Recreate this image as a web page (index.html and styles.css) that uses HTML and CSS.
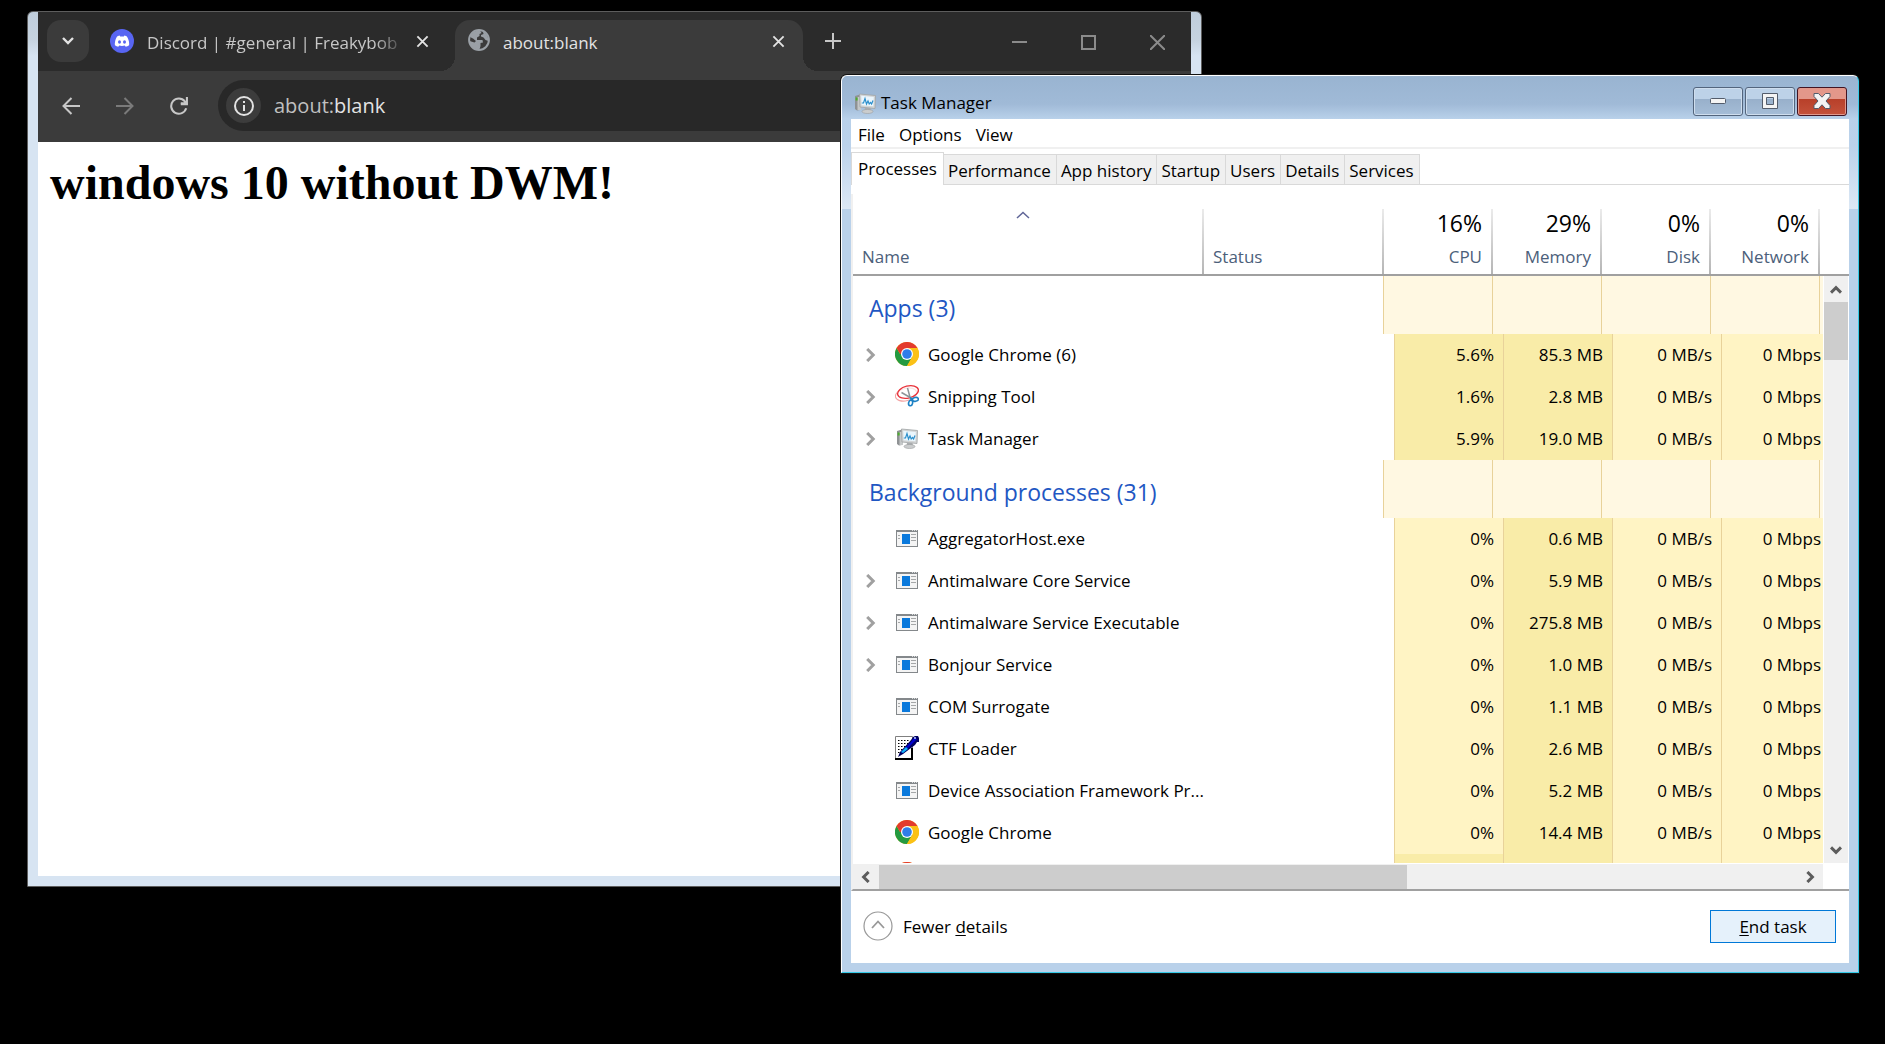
FILE: index.html
```html
<!DOCTYPE html>
<html lang="en">
<head>
<meta charset="utf-8">
<title>Desktop</title>
<link rel="stylesheet" href="styles.css">
</head>
<body>
<svg class="sprite" aria-hidden="true">
  <symbol id="chrome" viewBox="0 0 24 24">
    <circle cx="12" cy="12" r="12" fill="#fbc116"/>
    <path d="M1.6 6A12 12 0 0 0 12 24L17.2 15L12 12H5.1Z" fill="#249a41"/>
    <path d="M12 24A12 12 0 0 0 22.4 6H12L17.2 15Z" fill="#fbc116"/>
    <path d="M1.6 6A12 12 0 0 1 22.4 6H12V12H5.1Z" fill="#e33b2e"/>
    <circle cx="12" cy="12" r="6" fill="#fff"/>
    <circle cx="12" cy="12" r="4.8" fill="#2f7de9"/>
  </symbol>
  <symbol id="monitor" viewBox="0 0 24 24">
    <path d="M2 5L7 3.5V19L4 19.5L2 18Z" fill="#8f9294"/>
    <path d="M4.500 6H8V19H4.500Z" fill="#c5c8c9"/>
    <rect x="2.600" y="6.500" width="2" height="3" fill="#4caf2c"/>
    <path d="M6.500 3L22.500 4.500L22 17.500L7 16Z" fill="#d3d5d6" stroke="#a0a3a5" stroke-width=".8"/>
    <path d="M8.200 4.800L20.800 6L20.300 15.300L8.600 14.200Z" fill="#eaf6fd"/>
    <path d="M8.800 12L10.500 12L12 7.500L13.500 13L15 10L16.200 13L17.600 11.500L18.600 13L20 9.500" fill="none" stroke="#2c8fcc" stroke-width="1.200"/>
    <path d="M12 17H17.500L18 20H11.500Z" fill="#a9acae"/>
    <ellipse cx="14.500" cy="20.500" rx="5.500" ry="2" fill="#cbcdce" stroke="#9b9ea0" stroke-width=".6"/>
  </symbol>
  <symbol id="snip" viewBox="0 0 24 24">
    <ellipse cx="11" cy="10.5" rx="10.8" ry="6.2" transform="rotate(-14 11 10.5)" fill="none" stroke="#f3a4a4" stroke-width="1.1"/>
    <ellipse cx="13" cy="8" rx="10.6" ry="6" transform="rotate(-14 13 8)" fill="#fff" fill-opacity=".7" stroke="#e8323a" stroke-width="1.4"/>
    <path d="M6.5 8.5L17 14.5M12.5 4L15.5 15" stroke="#8d9599" stroke-width="1.5"/>
    <ellipse cx="20.4" cy="15.4" rx="3" ry="1.9" transform="rotate(-12 20.4 15.4)" fill="none" stroke="#1c80c4" stroke-width="1.6"/>
    <ellipse cx="15.6" cy="19" rx="2" ry="2.8" transform="rotate(14 15.6 19)" fill="none" stroke="#1c80c4" stroke-width="1.6"/>
    <path d="M14.6 12.6L18 15L15.6 16.4Z" fill="#1c80c4"/>
  </symbol>
  <symbol id="exe" viewBox="0 0 24 24">
    <rect x="1.5" y="4.5" width="21" height="16" fill="#f4f4f4" stroke="#84888b"/>
    <path d="M1 4H23V6H1Z" fill="#84888b"/>
    <path d="M17 4.5H18M19 4.5H20M21 4.5H22" stroke="#d8dadb"/>
    <path d="M3 9.5H5M3 12.5H5M16 8.5H21M16 11.5H21M16 14.5H21" stroke="#a5a7a8"/>
    <rect x="7" y="8" width="8" height="10" fill="#0a79dc"/>
  </symbol>
  <symbol id="ctf" viewBox="0 0 24 24">
    <path d="M.5 .5H17.5V23.5H.5Z" fill="#fff" stroke="#808080"/>
    <path d="M16 12H18V24H0V22H16Z" fill="#000"/>
    <path d="M3 4.5H15M3 7.5H14M3 10.5H11M3 13.5H8M3 16.5H6" stroke="#000" stroke-dasharray="1.5 1.5"/>
    <path d="M3 21L5 16L16 4L18 1L20 0H23L24 2V6L22 6L20 9L8 18Z" fill="#000060"/>
    <path d="M6 16L16 6L19 2L22 3L18 7L8 17Z" fill="#0000d0"/>
    <path d="M6 16L11 11L13 13L8 17Z" fill="#12b6f5"/>
    <path d="M19 1H21V3H19Z" fill="#8fa0e8"/>
  </symbol>
  <symbol id="chev" viewBox="0 0 10 14">
    <path d="M1.2 1L7.2 7L1.2 13" fill="none" stroke="#a0a0a0" stroke-width="3"/>
  </symbol>
  <symbol id="arrow" viewBox="0 0 12 12">
    <path d="M1 8.6L6 3.6L11 8.6" fill="none" stroke="#5c5c5c" stroke-width="3"/>
  </symbol>
  <symbol id="close" viewBox="0 0 14 14">
    <path d="M1.5 1.5L12.5 12.5M12.5 1.5L1.5 12.5" fill="none" stroke="currentColor" stroke-width="2"/>
  </symbol>
</svg>

<main class="desktop">
<section class="browser" aria-label="Browser window">
  <div class="chrome">
    <header class="strip">
      <button class="tabsearch" aria-label="Search tabs"><svg width="14" height="10" viewBox="0 0 14 10"><path d="M2 2L7 7L12 2" fill="none" stroke="#e3e3e3" stroke-width="2.4"/></svg></button>
      <div class="tab">
        <svg class="fav" width="24" height="24" viewBox="0 0 24 24"><circle cx="12" cy="12" r="12" fill="#5865f2"/><path d="M9.6 6.6L8 7C6.800 7.400 5.800 9.500 5.200 12C4.800 13.800 4.700 15.200 4.900 16.200C6 17.100 7.200 17.600 8.300 17.800L9.200 16.500C11 17 13 17 14.800 16.500L15.700 17.800C16.800 17.600 18 17.100 19.100 16.200C19.300 15.200 19.200 13.800 18.800 12C18.200 9.500 17.200 7.400 16 7L14.400 6.600L13.800 7.600H10.200Z" fill="#fff"/><ellipse cx="9.500" cy="13" rx="1.500" ry="1.700" fill="#5865f2"/><ellipse cx="14.500" cy="13" rx="1.500" ry="1.700" fill="#5865f2"/></svg>
        <span class="tabtext fade">Discord | #general | Freakybob</span>
        <button class="plain" aria-label="Close tab"><svg width="13" height="13"><use href="#close"/></svg></button>
      </div>
      <div class="tab active">
        <svg class="fav" width="22" height="22" viewBox="0 0 22 22"><circle cx="11" cy="11" r="9.900" fill="#3b3b3b" stroke="#9aa0a6" stroke-width="2"/><path d="M2 8C4 3 8 1 12 1.500L13.500 4L11.500 5V7L9 8.500V11H14.500L15 13.500L12.500 14V17L11.500 20.500C6 20.500 2 17 1.600 12L6.500 13.500L8 12L5 9.500Z" fill="#9aa0a6"/><path d="M15 2.500C19 5 20.500 8 20.400 12L17.500 11L15.500 8.500L13 7.500V6L15.500 5Z" fill="#9aa0a6"/></svg>
        <span class="tabtext">about:blank</span>
        <button class="plain" aria-label="Close tab"><svg width="13" height="13"><use href="#close"/></svg></button>
      </div>
      <button class="plain newtab" aria-label="New tab"><svg width="16" height="16" viewBox="0 0 16 16"><path d="M8 0V16M0 8H16" stroke="#c7c7c7" stroke-width="2"/></svg></button>
      <div class="winctl">
        <button class="plain" aria-label="Minimize"><svg width="15" height="15"><path d="M0 7H15" stroke="#8b8b8b" stroke-width="2"/></svg></button>
        <button class="plain" aria-label="Maximize"><svg width="15" height="15"><path d="M1 1H14V14H1Z" fill="none" stroke="#8b8b8b" stroke-width="2"/></svg></button>
        <button class="plain" aria-label="Close"><svg width="15" height="15"><path d="M0 0L15 15M15 0L0 15" stroke="#8b8b8b" stroke-width="2"/></svg></button>
      </div>
    </header>
    <div class="toolbar">
      <button class="plain nav" aria-label="Back"><svg width="18" height="18" viewBox="0 0 18 18"><path d="M18 9H1.500M9.500 1L1.500 9L9.500 17" fill="none" stroke="#c7c7c7" stroke-width="2"/></svg></button>
      <button class="plain nav" aria-label="Forward" disabled><svg width="18" height="18" viewBox="0 0 18 18"><path d="M0 9H16.500M8.500 1L16.500 9L8.500 17" fill="none" stroke="#7a7a7a" stroke-width="2"/></svg></button>
      <button class="plain nav" aria-label="Reload"><svg width="18" height="18" viewBox="0 0 20 20"><path d="M18 12.500A8.500 8.500 0 1 1 16.500 4.800L18 7H12" fill="none" stroke="#c7c7c7" stroke-width="2.300"/><path d="M18.800 0V8H12" fill="none" stroke="#c7c7c7" stroke-width="2.300"/></svg></button>
      <div class="omnibox">
        <button class="info" aria-label="Site information"><svg width="20" height="20" viewBox="0 0 20 20"><circle cx="10" cy="10" r="9" fill="none" stroke="#e3e3e3" stroke-width="2"/><path d="M10 9V15M10 5V7" stroke="#e3e3e3" stroke-width="2"/></svg></button>
        <a class="url" href="about:blank"><span>about:</span>blank</a>
      </div>
    </div>
    <article class="page"><h1>windows 10 without DWM!</h1></article>
  </div>
</section>

<section class="taskmgr" aria-label="Task Manager">
  <header class="title">
    <svg width="24" height="24"><use href="#monitor"/></svg>
    <span>Task Manager</span>
    <div class="caption">
      <button class="cap" aria-label="Minimize"><svg width="16" height="16" viewBox="0 0 16 16"><rect x=".500" y="5.500" width="15" height="5" rx="1" fill="#f4f4f4" stroke="#535c6b"/></svg></button>
      <button class="cap" aria-label="Maximize"><svg width="16" height="16" viewBox="0 0 16 16"><path d="M.500 .500H15.500V15.500H.500ZM4.500 4.500V11.500H11.500V4.500Z" fill="#f4f4f4" fill-rule="evenodd" stroke="#535c6b"/></svg></button>
      <button class="cap red" aria-label="Close"><svg width="18" height="16" viewBox="0 0 18 16"><path d="M1 .500H5.500L9 4.200L12.500 .500H17V3.500L13 8L17 12.500V15.500H12.500L9 11.800L5.500 15.500H1V12.500L5 8L1 3.500Z" fill="#f4f4f4" stroke="#535c6b"/></svg></button>
    </div>
  </header>
  <div class="client">
    <nav class="menu"><button>File</button><button>Options</button><button>View</button></nav>
    <div class="tabs" role="tablist">
      <button role="tab" class="sel" aria-selected="true">Processes</button><button role="tab">Performance</button><button role="tab">App history</button><button role="tab">Startup</button><button role="tab">Users</button><button role="tab">Details</button><button role="tab">Services</button>
    </div>
    <div class="list">
      <table>
        <thead><tr>
          <th class="name"><svg class="sort" width="14" height="8" viewBox="0 0 14 8"><path d="M1 7L7 1.500L13 7" fill="none" stroke="#5f6597" stroke-width="1.500"/></svg>Name</th><th class="status">Status</th>
          <th><b>16%</b>CPU</th><th><b>29%</b>Memory</th><th><b>0%</b>Disk</th><th><b>0%</b>Network</th>
        </tr></thead>
        <tbody>
          <tr class="group"><th scope="rowgroup">Apps (3)</th><td></td><td></td><td></td><td></td><td></td></tr>
          <tr><th scope="row"><svg class="ch"><use href="#chev"/></svg><svg class="ic"><use href="#chrome"/></svg>Google Chrome (6)</th><td class="hot">5.6%</td><td class="hot">85.3 MB</td><td>0 MB/s</td><td>0 Mbps</td></tr>
          <tr><th scope="row"><svg class="ch"><use href="#chev"/></svg><svg class="ic"><use href="#snip"/></svg>Snipping Tool</th><td class="hot">1.6%</td><td class="hot">2.8 MB</td><td>0 MB/s</td><td>0 Mbps</td></tr>
          <tr><th scope="row"><svg class="ch"><use href="#chev"/></svg><svg class="ic"><use href="#monitor"/></svg>Task Manager</th><td class="hot">5.9%</td><td class="hot">19.0 MB</td><td>0 MB/s</td><td>0 Mbps</td></tr>
          <tr class="group"><th scope="rowgroup">Background processes (31)</th><td></td><td></td><td></td><td></td><td></td></tr>
          <tr><th scope="row"><svg class="ch"></svg><svg class="ic"><use href="#exe"/></svg>AggregatorHost.exe</th><td>0%</td><td class="hot">0.6 MB</td><td>0 MB/s</td><td>0 Mbps</td></tr>
          <tr><th scope="row"><svg class="ch"><use href="#chev"/></svg><svg class="ic"><use href="#exe"/></svg>Antimalware Core Service</th><td>0%</td><td class="hot">5.9 MB</td><td>0 MB/s</td><td>0 Mbps</td></tr>
          <tr><th scope="row"><svg class="ch"><use href="#chev"/></svg><svg class="ic"><use href="#exe"/></svg>Antimalware Service Executable</th><td>0%</td><td class="hot">275.8 MB</td><td>0 MB/s</td><td>0 Mbps</td></tr>
          <tr><th scope="row"><svg class="ch"><use href="#chev"/></svg><svg class="ic"><use href="#exe"/></svg>Bonjour Service</th><td>0%</td><td class="hot">1.0 MB</td><td>0 MB/s</td><td>0 Mbps</td></tr>
          <tr><th scope="row"><svg class="ch"></svg><svg class="ic"><use href="#exe"/></svg>COM Surrogate</th><td>0%</td><td class="hot">1.1 MB</td><td>0 MB/s</td><td>0 Mbps</td></tr>
          <tr><th scope="row"><svg class="ch"></svg><svg class="ic"><use href="#ctf"/></svg>CTF Loader</th><td>0%</td><td class="hot">2.6 MB</td><td>0 MB/s</td><td>0 Mbps</td></tr>
          <tr><th scope="row"><svg class="ch"></svg><svg class="ic"><use href="#exe"/></svg>Device Association Framework Pr...</th><td>0%</td><td class="hot">5.2 MB</td><td>0 MB/s</td><td>0 Mbps</td></tr>
          <tr><th scope="row"><svg class="ch"></svg><svg class="ic"><use href="#chrome"/></svg>Google Chrome</th><td>0%</td><td class="hot">14.4 MB</td><td>0 MB/s</td><td>0 Mbps</td></tr>
          <tr><th scope="row"><svg class="ch"></svg><svg class="ic"><use href="#chrome"/></svg></th><td class="hot"></td><td class="hot"></td><td></td><td></td></tr>
        </tbody>
      </table>
      <div class="vbar">
        <button class="sb" aria-label="Scroll up"><svg width="12" height="12"><use href="#arrow"/></svg></button>
        <div class="vthumb"></div>
        <button class="sb down" aria-label="Scroll down"><svg width="12" height="12"><use href="#arrow"/></svg></button>
      </div>
      <div class="hbar">
        <button class="sb left" aria-label="Scroll left"><svg width="12" height="12"><use href="#arrow"/></svg></button>
        <div class="hthumb"></div>
        <button class="sb right" aria-label="Scroll right"><svg width="12" height="12"><use href="#arrow"/></svg></button>
      </div>
    </div>
    <footer class="foot">
      <button class="fewer"><svg width="30" height="30" viewBox="0 0 30 30"><circle cx="15" cy="15" r="14" fill="none" stroke="#989898" stroke-width="1.200"/><path d="M9 17L15 10.500L21 17" fill="none" stroke="#989898" stroke-width="1.800"/></svg><span>Fewer <u>d</u>etails</span></button>
      <button class="end"><u>E</u>nd task</button>
    </footer>
  </div>
</section>
</main>
</body>
</html>
```
FILE: styles.css
```css
* { box-sizing: border-box; }
html, body { height: 100%; }
body { margin: 0; background: #000; font: 17px/24px "Open Sans", "Noto Sans", sans-serif; color: #000; }
button { font: inherit; color: inherit; padding: 0; border: 0; background: none; white-space: nowrap; }
svg { display: block; flex: none; }
.sprite { position: absolute; width: 0; height: 0; }
.desktop { position: relative; height: 100%; overflow: hidden; }

/* Browser window */
.browser {
  position: absolute; inset: 11px 683px 157px 27px;
  padding: 0 10px 10px; border: 1px solid #5d5d5d; border-radius: 6px 6px 0 0;
  background: linear-gradient(#bfcddb, #c6d3e0 28px, #d7e4f2 44px);
}
.chrome { height: 100%; display: flex; flex-direction: column; background: #3b3b3b; }
.strip { display: flex; height: 59px; padding: 8px 0 0 9px; background: #2b2b2b; }
.tabsearch { width: 42px; height: 42px; border-radius: 14px; background: #3b3b3b; display: grid; place-items: center; flex: none; }
.tab { display: flex; align-items: flex-start; width: 348px; height: 51px; padding: 9px 18px 0 13px; color: #c7c7c7; flex: none; }
.tab:not(.active) { width: 366px; padding: 9px 26px 0 21px; }
.tab .fav { margin-right: 13px; }
.tabtext { flex: 1; overflow: hidden; white-space: nowrap; line-height: 28px; }
.tab .plain { height: 24px; color: #e3e3e3; }
.fade { margin-right: 10px; -webkit-mask-image: linear-gradient(90deg, #000 88%, transparent); mask-image: linear-gradient(90deg, #000 88%, transparent); }
.tab.active { position: relative; background: #3b3b3b; border-radius: 15px 15px 0 0; color: #e3e3e3; }
.tab.active::before, .tab.active::after { content: ""; position: absolute; bottom: 0; width: 15px; height: 15px; }
.tab.active::before { left: -15px; background: radial-gradient(circle at 0 0, transparent 15px, #3b3b3b 15px); }
.tab.active::after { right: -15px; background: radial-gradient(circle at 100% 0, transparent 15px, #3b3b3b 15px); }
.newtab { margin: 13px 0 0 22px; align-self: flex-start; }
.winctl { display: flex; gap: 54px; margin: 15px 26px 0 auto; align-self: flex-start; }
.toolbar { display: flex; align-items: center; gap: 36px; height: 71px; padding: 0 12px 2px 24px; }
.nav { width: 18px; display: grid; place-items: center; }
.omnibox { flex: 1; display: flex; align-items: center; gap: 13px; height: 51px; margin-left: -6px; padding: 0 8px; border-radius: 26px; background: #282828; }
.info { width: 35px; height: 35px; border-radius: 50%; background: #3c3c3c; display: grid; place-items: center; }
.url { color: #e3e3e3; text-decoration: none; font-size: 20px; }
.url span { color: #c0c0c0; }
.page { flex: 1; padding: 12px; background: #fff; }
.page h1 { margin: 0; font: bold 48px/58px "Liberation Serif", serif; white-space: nowrap; }

/* Task Manager window */
.taskmgr {
  position: absolute; inset: 75px 26px 71px 841px;
  display: flex; flex-direction: column; padding: 0 9px 9px;
  border: 1px solid #fff; border-right-color: #35cbe8; border-bottom-color: #35cbe8; border-radius: 6px 6px 0 0;
  background: linear-gradient(#99b4d1, #a0bad7 28px, #b9d1ea 43px, #bbd2eb 70px, #dce8f5 133px, #b9d1ea 133px);
  box-shadow: 0 0 0 1px #111;
}
.title { display: flex; align-items: center; gap: 4px; height: 43px; padding: 11px 2px 0; background: linear-gradient(#99b4d1, #a0bad7 28px, #b9d1ea); }
.caption { display: flex; gap: 2px; margin: -4px 0 0 auto; }
.cap {
  width: 50px; height: 29px; display: grid; place-items: center;
  border: 1px solid #53657d; border-radius: 3px; box-shadow: inset 0 0 0 1px #cfdeee;
  background: linear-gradient(#bdd2e8 40%, #98b0cb 42%, #a5bdd7);
}
.cap.red { border-color: #431422; box-shadow: inset 0 0 0 1px #e0988c; background: linear-gradient(#e3978a 40%, #b8402a 42%, #c4523b); }
.client { flex: 1; min-height: 0; display: flex; flex-direction: column; background: #fff; }
.menu { display: flex; gap: 14px; height: 30px; padding: 4px 7px 0; border-bottom: 2px solid #f0f0f0; }
.menu button { height: 24px; }
.tabs { display: flex; align-items: flex-end; height: 36px; border-bottom: 1px solid #d9d9d9; }
.tabs button { height: 30px; padding: 2px 5px 0 4px; border: 1px solid #d9d9d9; border-width: 1px 1px 0 0; background: #f0f0f0; }
.tabs .sel { height: 33px; margin-bottom: -1px; padding: 0 6px; border-left-width: 1px; background: #fff; }
.list {
  flex: 1; min-height: 0; margin-top: 9px; padding: 15px 0 0; display: grid;
  grid-template: minmax(0, 1fr) 26px / minmax(0, 1fr) 26px;
  border-left: 2px solid #f0f0f0; border-bottom: 2px solid #a0a0a0;
}
table { grid-area: 1 / 1 / 2 / 3; display: flex; flex-direction: column; min-height: 0; }
th { font-weight: normal; text-align: left; padding: 0; }
td { padding: 0; }
thead { display: block; border-bottom: 2px solid #a0a0a0; }
thead tr { display: grid; grid-template-columns: minmax(0, 1fr) 180px repeat(4, 109px) 29px; height: 65px; }
thead th {
  display: flex; flex-direction: column; align-items: flex-end; justify-content: space-between; padding: 0 9px 5px 0;
  border-right: 2px solid; border-image: linear-gradient(#ececec, #b4b4b4) 1; color: #4c607a;
}
thead b { font-weight: normal; font-size: 23px; line-height: 28px; color: #000; }
thead .name { padding-left: 9px; align-items: flex-start; }
thead .status { padding-left: 9px; align-items: flex-start; justify-content: flex-end; }
.sort { align-self: center; margin: 2px 10px 0 0; }
tbody { display: block; flex: 1; min-height: 0; margin-right: 26px; overflow: hidden; }
tbody tr { display: grid; grid-template-columns: minmax(0, 1fr) repeat(3, 109px) 102px; height: 42px; }
tbody th { display: flex; align-items: center; white-space: nowrap; padding-left: 13px; }
.ch { width: 10px; height: 14px; margin-right: 19px; }
.ic { width: 24px; height: 24px; margin: 0 9px 2px 0; }
tbody td { border-left: 1px solid #e8d29a; background: #fff4c4; text-align: right; line-height: 42px; padding-right: 9px; white-space: nowrap; }
tbody td:last-child { padding-right: 2px; }
tbody td.hot { background: #f9eca8; }
tbody .group { grid-template-columns: minmax(0, 1fr) repeat(4, 109px) 4px; height: 58px; }
.group th { padding: 6px 0 0 16px; font-size: 23px; color: #1f57c3; }
tbody .group td { background: #fff8e2; padding: 0; }
.vbar { grid-area: 1 / 2; margin: 67px 1px 0; background: #f0f0f0; display: flex; flex-direction: column; }
.sb { display: grid; place-items: center; width: 26px; height: 26px; flex: none; }
.vbar .sb { width: 24px; padding-top: 2px; }
.vthumb { height: 58px; background: #cdcdcd; }
.vbar .down { margin-top: auto; padding-top: 0; }
.down svg { transform: rotate(180deg); }
.left svg { transform: rotate(-90deg); }
.right svg { transform: rotate(90deg); }
.hbar { grid-area: 2 / 1; margin: 1px 0 0; background: #f0f0f0; display: grid; grid-template-columns: 26px 23fr 17fr 26px; align-items: center; }
.hthumb { height: 24px; background: #cdcdcd; }
.right { grid-column: 4; }
.foot { display: flex; justify-content: space-between; align-items: center; height: 72px; padding: 0 13px 2px 12px; }
.fewer { display: flex; align-items: center; gap: 10px; }
.fewer span { padding-top: 2px; }
.end { width: 126px; height: 33px; padding-top: 2px; border: 1px solid #0078d7; background: #e5f1fb; }
u { text-underline-offset: 2px; text-decoration-thickness: 1px; }
```
